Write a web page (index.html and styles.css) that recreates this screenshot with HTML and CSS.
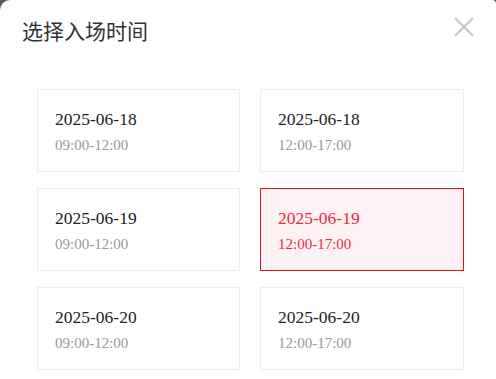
FILE: index.html
```html
<!DOCTYPE html>
<html lang="zh-CN">
<head>
  <meta charset="UTF-8" />
  <meta name="viewport" content="width=device-width, initial-scale=1.0"/>
  <title>选择入场时间</title>
  <link rel="stylesheet" href="styles.css">
</head>
<body>

  <div class="sheet">
    <div class="sheet-header">
      <h2 class="sheet-title">选择入场时间</h2>
      <span class="sheet-close" aria-label="关闭">
        <svg width="20" height="20" viewBox="0 0 20 20">
          <path d="M1 1 L19 19 M19 1 L1 19" stroke="#c4c4c4" stroke-width="2" fill="none"/>
        </svg>
      </span>
    </div>

    <div class="slot-grid">
      <div class="slot">
        <div class="slot-date">2025-06-18</div>
        <div class="slot-time">09:00-12:00</div>
      </div>
      <div class="slot">
        <div class="slot-date">2025-06-18</div>
        <div class="slot-time">12:00-17:00</div>
      </div>
      <div class="slot">
        <div class="slot-date">2025-06-19</div>
        <div class="slot-time">09:00-12:00</div>
      </div>
      <div class="slot active">
        <div class="slot-date">2025-06-19</div>
        <div class="slot-time">12:00-17:00</div>
      </div>
      <div class="slot">
        <div class="slot-date">2025-06-20</div>
        <div class="slot-time">09:00-12:00</div>
      </div>
      <div class="slot">
        <div class="slot-date">2025-06-20</div>
        <div class="slot-time">12:00-17:00</div>
      </div>
    </div>
  </div>

</body>
</html>
```

FILE: styles.css
```css
body {
  margin: 0;
  padding: 0;
  background: #5a5a5a;
  font-family: "Liberation Serif", "Times New Roman", serif;
}
.sheet {
  background: #fff;
  min-height: 379px;
  border-radius: 10px 4px 0 0;
  overflow: hidden;
}
.sheet-header {
  display: flex;
  justify-content: space-between;
  align-items: flex-start;
  padding: 15px 22px 0 22px;
  height: 72px;
  box-sizing: border-box;
}
.sheet-title {
  margin: 0;
  font-family: "Noto Sans CJK SC", "Noto Sans", sans-serif;
  font-weight: normal;
  font-size: 21px;
  line-height: 30px;
  color: #333;
}
.sheet-close {
  display: block;
  width: 20px;
  height: 20px;
  margin-top: 2px;
  cursor: pointer;
}
.slot-grid {
  display: grid;
  grid-template-columns: 203px 204px;
  column-gap: 20px;
  row-gap: 16px;
  padding: 17px 0 0 37px;
}
.slot {
  border: 1px solid #ececec;
  padding: 17px 18px 16px 17px;
  background: #fff;
}
.slot-date {
  font-size: 17.5px;
  line-height: 24px;
  color: #222;
}
.slot-time {
  margin-top: 4px;
  font-size: 15px;
  line-height: 20px;
  color: #999;
}
.slot.active {
  background: #fdf1f3;
  border-color: #e2101d;
}
.slot.active .slot-date,
.slot.active .slot-time {
  color: #ea2a38;
}
```
